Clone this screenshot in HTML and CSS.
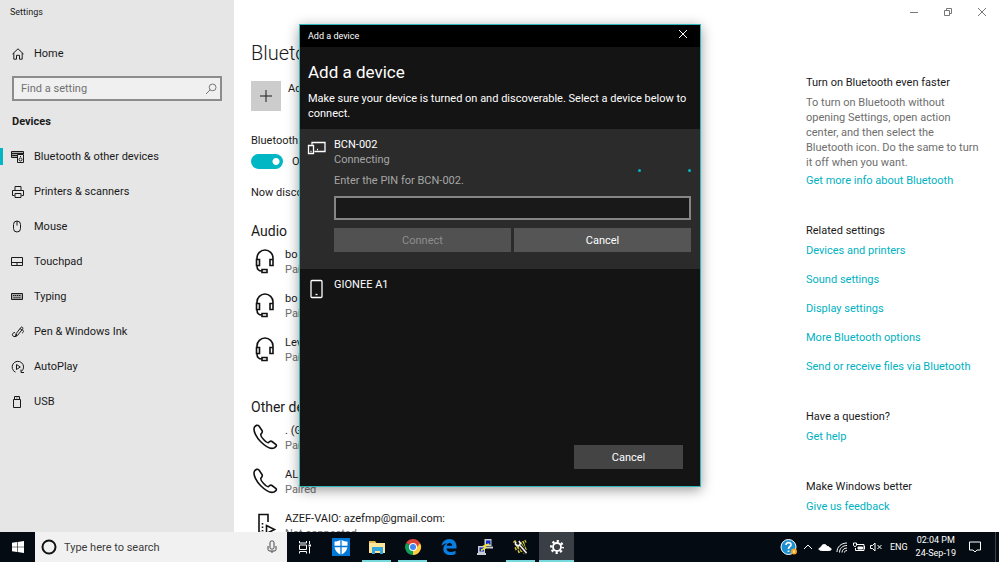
FILE: index.html
```html
<!DOCTYPE html>
<html lang="en">
<head>
  <meta charset="UTF-8" />
  <meta name="viewport" content="width=device-width, initial-scale=1.0" />
  <title>Settings</title>
  <link rel="stylesheet" href="styles.css">
</head>
<body>
  <div class="settings">
    <nav class="sidebar">
      <div class="app-title">Settings</div>
      <a class="nav-item home" href="#home">
        <svg class="icon" viewBox="0 0 14 14"><path d="M1.5 7 7 1.8 12.5 7M2.8 6v6.2h2.7V8.3h3v3.9h2.7V6" /></svg>
        Home
      </a>
      <div class="search">
        <input type="text" placeholder="Find a setting" aria-label="Find a setting" />
        <svg class="icon" viewBox="0 0 14 14"><circle cx="8.6" cy="5.4" r="3.4" /><path d="M6.2 7.8 2 12" /></svg>
      </div>
      <h2>Devices</h2>
      <a class="nav-item active" href="#bluetooth">
        <svg class="icon" viewBox="0 0 14 14"><path fill="#aaa" d="M6.500 7.500h-6v-6h12V4" /><path d="M1 3.500h11M1 5.500h5" /><path fill="#e6e6e6" d="M6.500 4.500h6v8h-6z" /><circle cx="9.500" cy="9.500" r="1.500" /><path d="M9 6.500h1" /></svg>
        Bluetooth &amp; other devices
      </a>
      <a class="nav-item" href="#printers">
        <svg class="icon" viewBox="0 0 14 14"><path d="M4 5.500V1.500h6v4M3.500 10.500h-2v-5h11v5h-2M4 8.500h6v4H4z" /></svg>
        Printers &amp; scanners
      </a>
      <a class="nav-item" href="#mouse">
        <svg class="icon" viewBox="0 0 14 14"><rect x="2.500" y="1" width="7" height="11" rx="3.500" /><path d="M6 1v4.500" /></svg>
        Mouse
      </a>
      <a class="nav-item" href="#touchpad">
        <svg class="icon" viewBox="0 0 14 14"><path d="M.500 2.500h11v8h-11zM.500 7.500h11M6 7.500v3" /></svg>
        Touchpad
      </a>
      <a class="nav-item" href="#typing">
        <svg class="icon" viewBox="0 0 14 14"><path fill="#aaa" d="M.500 3.500h11v6h-11z" /><path d="M2 5.500h8M2.500 7.700h7" stroke-dasharray="1.300 .6" /></svg>
        Typing
      </a>
      <a class="nav-item" href="#pen">
        <svg class="icon" viewBox="0 0 14 14"><path d="M4.500 11.500 5 8.800l5-6.500c.7-.8 2.400.2 1.800 1.400L6.700 10.300zM9 3.500l2 1.600M4 7.500c-3 0-3.500 3.500-1 4 2 .4 3-.5 2.500-2.500M11 5c2 0 2 2.500 0 3" /></svg>
        Pen &amp; Windows Ink
      </a>
      <a class="nav-item" href="#autoplay">
        <svg class="icon" viewBox="0 0 14 14"><path d="M4.500 12.200a5.700 5.700 0 1 1 6-.8M5.500 4.500v5L9.300 7zM10 9.500v3h3" /></svg>
        AutoPlay
      </a>
      <a class="nav-item" href="#usb">
        <svg class="icon" viewBox="0 0 14 14"><path d="M3.500 4.500v-3h5v3M2.500 4.500h7v8h-7zM5 3h.5M6.700 3h.5" /></svg>
        USB
      </a>
    </nav>

    <main class="page">
      <section class="devices">
        <h1>Bluetooth &amp; other devices</h1>
        <button class="add-device" type="button">
          <span class="plus"><svg viewBox="0 0 14 14"><path d="M7 1v12M1 7h12" /></svg></span>
          <span>Add Bluetooth or other device</span>
        </button>
        <div class="label">Bluetooth</div>
        <label class="toggle"><input type="checkbox" role="switch" checked />On</label>
        <p class="discoverable">Now discoverable as "AZEF"</p>

        <h3>Audio</h3>
        <ul class="device-list">
          <li>
            <svg class="device-icon" viewBox="0 0 28 28"><path d="M6 13V11a8 8 0 0 1 16 0v2M5.500 12.500h3v6h-3zM19 12.500h3v6h-3zM6 19c0 3 1.500 5 5 5M11 22.500h5v3h-5z" /></svg>
            <div><div>bo</div><div class="state">Paired</div></div>
          </li>
          <li>
            <svg class="device-icon" viewBox="0 0 28 28"><path d="M6 13V11a8 8 0 0 1 16 0v2M5.500 12.500h3v6h-3zM19 12.500h3v6h-3zM6 19c0 3 1.500 5 5 5M11 22.500h5v3h-5z" /></svg>
            <div><div>bo</div><div class="state">Paired</div></div>
          </li>
          <li>
            <svg class="device-icon" viewBox="0 0 28 28"><path d="M6 13V11a8 8 0 0 1 16 0v2M5.500 12.500h3v6h-3zM19 12.500h3v6h-3zM6 19c0 3 1.500 5 5 5M11 22.500h5v3h-5z" /></svg>
            <div><div>Level U</div><div class="state">Paired</div></div>
          </li>
        </ul>

        <h3 class="other">Other devices</h3>
        <ul class="device-list">
          <li>
            <svg class="device-icon" viewBox="0 0 28 28"><path d="M3.500 4C1.500 8 6 15 9.500 18.500c4 4 10 8 13.500 6.500 2-1 3-2.500 2-3.500l-4-3c-1.500-1-2.500 0-3.500 1-1.500 1-9-6-7.500-8.500 1-1.500 2-2 1-3.500L8 3C6.500 1.500 4.500 2.500 3.500 4z" /></svg>
            <div><div>. (Gionee)</div><div class="state">Paired</div></div>
          </li>
          <li>
            <svg class="device-icon" viewBox="0 0 28 28"><path d="M3.500 4C1.500 8 6 15 9.500 18.500c4 4 10 8 13.500 6.500 2-1 3-2.500 2-3.500l-4-3c-1.500-1-2.500 0-3.500 1-1.500 1-9-6-7.500-8.500 1-1.500 2-2 1-3.500L8 3C6.500 1.500 4.500 2.500 3.500 4z" /></svg>
            <div><div>AL</div><div class="state">Paired</div></div>
          </li>
          <li>
            <svg class="device-icon" viewBox="0 0 28 28"><path d="M17 11V3.500H8v18h5M15.500 14.500v8l8-4z" /><path d="M11.500 12v8" stroke-dasharray="1.500 2" /></svg>
            <div><div>AZEF-VAIO: azefmp@gmail.com:</div><div class="state">Not connected</div></div>
          </li>
        </ul>
      </section>

      <aside class="side">
        <div class="window-controls">
          <button type="button" aria-label="Minimize"><svg viewBox="0 0 10 10"><path d="M1 5.500h8" /></svg></button>
          <button type="button" aria-label="Restore"><svg viewBox="0 0 10 10"><path d="M1.500 3.500h5v5h-5zM3.500 3V1.500h5v5H7" /></svg></button>
          <button type="button" aria-label="Close"><svg viewBox="0 0 10 10"><path d="m1 1 8 8M9 1 1 9" /></svg></button>
        </div>
        <section class="help">
          <h4>Turn on Bluetooth even faster</h4>
          <p>To turn on Bluetooth without opening Settings, open action center, and then select the Bluetooth icon. Do the same to turn it off when you want.</p>
          <a href="#info">Get more info about Bluetooth</a>
        </section>
        <section class="related">
          <h4>Related settings</h4>
          <a href="#printers">Devices and printers</a>
          <a href="#sound">Sound settings</a>
          <a href="#display">Display settings</a>
          <a href="#more">More Bluetooth options</a>
          <a href="#files">Send or receive files via Bluetooth</a>
        </section>
        <section class="related">
          <h4>Have a question?</h4>
          <a href="#help">Get help</a>
        </section>
        <section class="related">
          <h4>Make Windows better</h4>
          <a href="#feedback">Give us feedback</a>
        </section>
      </aside>
    </main>
  </div>

  <div class="dialog" role="dialog" aria-labelledby="dialogTitle">
    <div class="dialog-bar">
      <span>Add a device</span>
      <button type="button" aria-label="Close"><svg viewBox="0 0 10 10"><path d="m1 1 8 8M9 1 1 9" /></svg></button>
    </div>
    <div class="dialog-head">
      <h2 id="dialogTitle">Add a device</h2>
      <p>Make sure your device is turned on and discoverable. Select a device below to connect.</p>
    </div>
    <form class="pairing">
      <svg class="pair-icon" viewBox="0 0 20 20"><path d="M5 5.500V3.500h13v9H7.500M1.500 6.500h5v8h-5z" /><path d="M3.500 12.500h1M10 10.500h1" /></svg>
      <div class="pair-body">
        <div>BCN-002</div>
        <div class="muted">Connecting</div>
        <div class="progress"><i></i><i></i></div>
        <label class="muted" for="pin">Enter the PIN for BCN-002.</label>
        <input type="text" id="pin" />
        <div class="pair-actions">
          <button type="button" disabled>Connect</button>
          <button type="button">Cancel</button>
        </div>
      </div>
    </form>
    <div class="found">
      <svg class="pair-icon" viewBox="0 0 20 20"><rect x="4" y="1.500" width="11" height="17" rx="1" /><path d="M8.500 15.500h2" /></svg>
      <div>GIONEE A1</div>
    </div>
    <div class="dialog-foot">
      <button type="button">Cancel</button>
    </div>
  </div>

  <footer class="taskbar">
    <button class="start" type="button" aria-label="Start">
      <svg viewBox="0 0 12 12"><path d="m0 1.700 5-.7v4.700H0zM5.600.9 12 0v5.700H5.600zM0 6.300h5V11l-5-.7zM5.600 6.300H12V12l-6.400-.9z" /></svg>
    </button>
    <div class="task-search">
      <svg class="cortana" viewBox="0 0 16 16"><circle cx="8" cy="8" r="6.500" /></svg>
      <input type="text" placeholder="Type here to search" aria-label="Type here to search" />
      <svg class="mic" viewBox="0 0 14 14"><rect x="5" y="1" width="4" height="8" rx="1.500" /><path d="M3 6v3.500Q3 11 5 11h4q2 0 2-1.500V6M7 11v2" /></svg>
    </div>
    <div class="apps">
      <button type="button" aria-label="Task View">
        <svg class="line" viewBox="0 0 18 18"><path d="M3.500 3v2h7V3M3.500 7h7v4.500h-7zM3.500 15.500v-2h7v2M13.500 3v3M13.500 9v6.500" /><path d="M12.500 7.500h2.500" stroke-width="2" /></svg>
      </button>
      <button type="button" aria-label="Windows Security">
        <svg viewBox="0 0 18 18"><path fill="#0078d7" d="M0 0h18v18H0z" /><path fill="#fff" d="M9 1.500c2 1.500 4 2 6.500 2V8c0 4-2.500 7-6.500 8.700C5 15 2.500 12 2.500 8V3.500c2.500 0 4.500-.5 6.500-2z" /><path stroke="#0078d7" stroke-width="1.300" d="M9 1v16M2 8.500h14" /></svg>
      </button>
      <button class="open" type="button" aria-label="File Explorer">
        <svg viewBox="0 0 18 18"><path fill="#e8b64c" d="M1 3h6l1.500 2H17v3H1z" /><path fill="#ffe69a" d="M1 5h16v10H1z" /><path fill="#35a7df" d="M4 9h11v7h-3v-3H7v3H4z" /></svg>
      </button>
      <button class="open" type="button" aria-label="Chrome">
        <svg viewBox="0 0 18 18"><path fill="#db4437" d="M9 9 2.100 5A8 8 0 0 1 16 5z" /><path fill="#0f9d58" d="M9 9v8A8 8 0 0 1 2.100 5z" /><path fill="#ffcd40" d="M9 9l7-4a8 8 0 0 1-7 12z" /><path fill="#db4437" d="M9 5h7l-3 4z" /><circle cx="9" cy="9" r="4" fill="#fff" /><circle cx="9" cy="9" r="3" fill="#4285f4" /></svg>
      </button>
      <button type="button" aria-label="Edge">
        <svg viewBox="0 0 18 18"><path fill="#0a7ee0" d="M1.500 8C2 4 5 1 9.300 1 14 1 16.500 4.500 16.500 8.500v2H6.500c.2 4 5 4.500 9 2.200v3.200C10 18.500 3.300 17 3.300 11c0-3 1.700-4.800 3.700-5.800C4.500 5.500 2.700 6.500 1.500 8zm5.200-.2h5.500c0-3.700-5.100-3.700-5.500 0z" /></svg>
      </button>
      <button type="button" aria-label="PuTTY">
        <svg viewBox="0 0 18 18"><path fill="#c9cdd1" d="M8.500 1h7v7h-7zM8 8.500h9v2H8zM2 8h7v7H2zM1 15h9v2H1z" /><path fill="#102cc4" d="M10 2.500h4.500v4H10zM3.500 9.500H8v4H3.500z" /><path fill="none" stroke="#f0e52a" stroke-width="1.500" d="m13 6-5 2 2 1.500-5 3" /></svg>
      </button>
      <button class="open" type="button" aria-label="Terminal tools">
        <svg viewBox="0 0 18 18"><path fill="none" stroke="#d9c93a" stroke-width="3" stroke-dasharray="1.500 1" d="m2 3 12 13M4 8l10-5M3 11l10-4M6 14l9-4" /><path stroke="#15171a" stroke-width="4" d="m5 4 9 11" /><path fill="none" stroke="#f2f2f2" stroke-width="1.500" d="M3.500 3.500v3l3 1.500 2-2.500L7 3M8 7.500l6.500 7.500" /></svg>
      </button>
      <button class="open current" type="button" aria-label="Settings">
        <svg class="line" viewBox="0 0 18 18"><circle cx="9" cy="9" r="4" stroke-width="1.800" /><circle cx="9" cy="9" r="5.800" stroke-width="2.400" stroke-dasharray="2.200 2.355" stroke-dashoffset="1" /></svg>
      </button>
    </div>
    <div class="tray">
      <svg class="tray-help" viewBox="0 0 18 18"><circle cx="8.500" cy="9" r="7.500" fill="#1b8fd2" stroke="#fff" /><path d="M6 7c0-3.500 5.500-3 5 0-.3 1.500-2.500 1.700-2.500 4M8.500 12.500V14" fill="none" stroke="#fff" stroke-width="1.700" /><circle cx="14" cy="13.500" r="3" fill="#f6a51b" /><path d="M14 12v3" stroke="#fff" /></svg>
      <svg viewBox="0 0 14 14"><path d="m3 9 4-4 4 4" /></svg>
      <svg viewBox="0 0 14 14"><path class="solid" d="M3.500 10.500C0 10.500.5 7.500 3 7.500 3.500 4 8 3.500 9 6.500c2-.3 2.500 1 2.500 1.500 2.500 0 2 2.500 0 2.500z" /></svg>
      <svg viewBox="0 0 14 14"><path d="M2 12C2 7 6 3 12 3M4.500 12.500c0-4 3-7 7.500-7M7 12.500c0-2.500 2-4.500 5-4.500M9.500 12.500c0-1.300 1-2 2.500-2" /></svg>
      <svg viewBox="0 0 14 14"><path d="M4.500 4.500h7.500v6H3.500V8M12.500 6v3M1.500 3v2.500Q3 8 4.500 5.500V3z" /><path class="solid" d="M6 7h4.500v2H6z" /></svg>
      <svg viewBox="0 0 14 14"><path d="M1.500 5.500h2L6 3v8L3.500 8.500h-2zM8.500 5l4 4M12.500 5l-4 4" /></svg>
      <span class="lang">ENG</span>
      <div class="clock"><div>02:04 PM</div><div>24-Sep-19</div></div>
      <button class="notify" type="button" aria-label="Notifications">
        <svg viewBox="0 0 14 14"><path d="M1.500 2h11v8H9l-2 2-2-2H1.500z" /></svg>
      </button>
    </div>
  </footer>
</body>
</html>
```
FILE: styles.css
```css
* {
  box-sizing: border-box;
}
body {
  display: flex;
  flex-direction: column;
  height: 100vh;
  margin: 0;
  overflow: hidden;
  color: #1a1a1a;
  font-family: 'Segoe UI', Roboto, 'Open Sans', sans-serif;
  font-size: 11px;
  line-height: 15px;
}
h1, h2, h3, h4, p, ul {
  margin: 0;
  padding: 0;
  font-weight: normal;
}
a {
  color: #00b2bf;
  text-decoration: none;
}
button, input {
  font: inherit;
  color: inherit;
}
button {
  padding: 0;
  border: 0;
  background: none;
}
svg {
  flex: none;
  fill: none;
  stroke: currentColor;
}

/* settings window */
.settings {
  display: grid;
  grid-template-columns: 234px 1fr;
  flex: 1;
  min-height: 0;
  overflow: hidden;
}
.sidebar {
  background: #e6e6e6;
}
.app-title {
  padding: 5px 10px;
  font-size: 9px;
}
.nav-item {
  display: flex;
  align-items: center;
  gap: 9px;
  height: 35px;
  padding-left: 11px;
  color: #1a1a1a;
}
.nav-item.home {
  margin-top: 11px;
}
.nav-item.active {
  box-shadow: inset 3px 0 #00b7c3;
  clip-path: inset(9px 0);
}
.icon {
  width: 14px;
  height: 14px;
}
.search {
  display: flex;
  align-items: center;
  height: 25px;
  margin: 5px 12px 0;
  padding-right: 2px;
  border: 2px solid #8c8c8c;
  background: #f0f0f0;
  color: #777;
}
.search input {
  flex: 1;
  min-width: 0;
  padding: 0 7px;
  border: 0;
  outline: 0;
  background: none;
}
.search input::placeholder {
  color: #707070;
  opacity: 1;
}
.sidebar h2 {
  padding: 13px 12px 10px;
  font-size: 11px;
  font-weight: 700;
}
.page {
  display: grid;
  grid-template-columns: 1fr 193px;
  min-width: 0;
  min-height: 0;
  background: #fff;
}
.devices {
  padding: 40px 0 0 17px;
}
.devices h1 {
  font-size: 20px;
  font-weight: 300;
  line-height: 26px;
}
.add-device {
  display: flex;
  gap: 7px;
  margin-top: 15px;
  text-align: left;
}
.plus {
  display: grid;
  place-items: center;
  width: 30px;
  height: 30px;
  background: #ccc;
}
.plus svg {
  width: 14px;
  height: 14px;
}
.label {
  margin-top: 22px;
}
.toggle {
  display: flex;
  align-items: center;
  gap: 9px;
  margin-top: 6px;
}
.toggle input {
  width: 32px;
  height: 15px;
  margin: 0;
  border-radius: 8px;
  appearance: none;
  background: radial-gradient(circle at 25px 50%, #fff 3px, #00b7c3 4px);
}
.discoverable {
  margin-top: 16px;
}
.devices h3 {
  margin-top: 20px;
  font-size: 14px;
  line-height: 22px;
}
.devices .other {
  margin-top: 31px;
}
.device-list {
  display: grid;
  gap: 14px;
  margin-top: 5px;
  list-style: none;
}
.device-list li {
  display: flex;
  gap: 6px;
  height: 30px;
}
.device-icon {
  width: 28px;
  height: 28px;
  color: #111;
  stroke-width: 1.6;
}
.state {
  color: #707070;
}

/* right column */
.window-controls {
  display: flex;
  justify-content: flex-end;
  height: 24px;
  color: #777;
}
.window-controls button {
  display: grid;
  place-items: center;
  width: 34px;
}
.window-controls svg, .dialog-bar svg {
  width: 10px;
  height: 10px;
}
.side h4 {
  font-size: 11px;
}
.help {
  padding: 51px 17px 0 0;
}
.help p {
  margin: 5px 0 3px;
  color: #6e6e6e;
}
.related {
  margin-top: 35px;
}
.related a {
  display: block;
  margin-bottom: 14px;
}
.related h4 {
  margin-bottom: 5px;
}
.related a:last-child {
  margin-bottom: 0;
}

/* add a device dialog */
.dialog {
  position: absolute;
  top: 24px;
  left: 299px;
  display: flex;
  flex-direction: column;
  width: 402px;
  min-height: 463px;
  border: 1px solid #2fb5bb;
  background: #141414;
  color: #fff;
  box-shadow: 0 3px 12px rgba(0, 0, 0, 0.4);
}
.dialog-bar {
  display: flex;
  align-items: center;
  justify-content: space-between;
  height: 22px;
  padding: 0 12px 0 8px;
  background: #000;
  font-size: 9px;
}
.dialog-head {
  padding: 12px 8px 8px;
}
.dialog-head h2 {
  font-size: 17px;
  line-height: 26px;
  margin-bottom: 6px;
}
.pairing, .found {
  display: flex;
  gap: 7px;
  padding: 8px 9px 8px 7px;
}
.pairing {
  padding-bottom: 17px;
  background: #2b2b2b;
}
.pair-icon {
  width: 20px;
  height: 20px;
  margin-top: 2px;
  stroke-width: 1.3;
}
.pair-body {
  flex: 1;
}
.muted {
  color: #a6a6a6;
}
.progress {
  display: flex;
  justify-content: flex-end;
  gap: 47px;
  height: 6px;
  padding-top: 2px;
}
.progress i {
  width: 3px;
  height: 3px;
  border-radius: 50%;
  background: #00b7c3;
}
.pair-body label {
  display: block;
}
.pair-body input {
  display: block;
  width: 100%;
  height: 24px;
  margin: 8px 0;
  padding: 0 6px;
  border: 2px solid #858585;
  border-radius: 0;
  background: #191919;
}
.pair-actions {
  display: grid;
  grid-template-columns: 1fr 1fr;
  gap: 3px;
}
.pair-actions button, .dialog-foot button {
  height: 24px;
  background: #555;
}
.pair-actions button:disabled {
  background: #515151;
  color: #8e8e8e;
}
.dialog-foot {
  display: flex;
  justify-content: flex-end;
  margin-top: auto;
  padding: 17px;
}
.dialog-foot button {
  width: 109px;
  background: #444;
}

/* taskbar */
.taskbar {
  display: flex;
  height: 30px;
  background: #050b12;
  color: #fff;
}
.start {
  width: 35px;
}
.start svg {
  width: 12px;
  height: 12px;
  margin: auto;
  display: block;
  fill: #fff;
  stroke: none;
}
.task-search {
  display: flex;
  align-items: center;
  width: 252px;
  padding: 0 8px 0 6px;
  background: #f1f1f1;
  color: #444;
}
.task-search input {
  flex: 1;
  min-width: 0;
  padding: 0 7px;
  border: 0;
  outline: 0;
  background: none;
}
.task-search input::placeholder {
  color: #3c3c3c;
  opacity: 1;
}
.cortana {
  width: 16px;
  height: 16px;
  color: #111;
  stroke-width: 2;
}
.mic {
  width: 14px;
  height: 14px;
}
.apps {
  display: flex;
  gap: 1px;
}
.apps button {
  display: grid;
  place-items: center;
  width: 35px;
}
.apps svg {
  width: 18px;
  height: 18px;
  stroke: none;
}
.apps .line {
  stroke: #fff;
}
.apps .open {
  background: linear-gradient(#76d9dd, #76d9dd) center bottom / 29px 2px no-repeat;
}
.apps .current {
  background-color: #3a3f45;
  background-size: 100% 2px;
}
.tray {
  display: flex;
  align-items: center;
  gap: 3px;
  margin-left: auto;
  margin-right: 3px;
  padding-right: 13px;
  border-right: 1px solid #3c4147;
  font-size: 9px;
}
.tray svg {
  width: 14px;
  height: 14px;
}
.tray .tray-help {
  width: 18px;
  height: 18px;
  stroke: none;
}
.tray .solid {
  fill: currentColor;
}
.lang {
  margin: 0 5px 0 4px;
}
.clock {
  text-align: center;
  line-height: 13px;
}
.notify {
  margin-left: 9px;
}
.notify svg {
  display: block;
}
```
